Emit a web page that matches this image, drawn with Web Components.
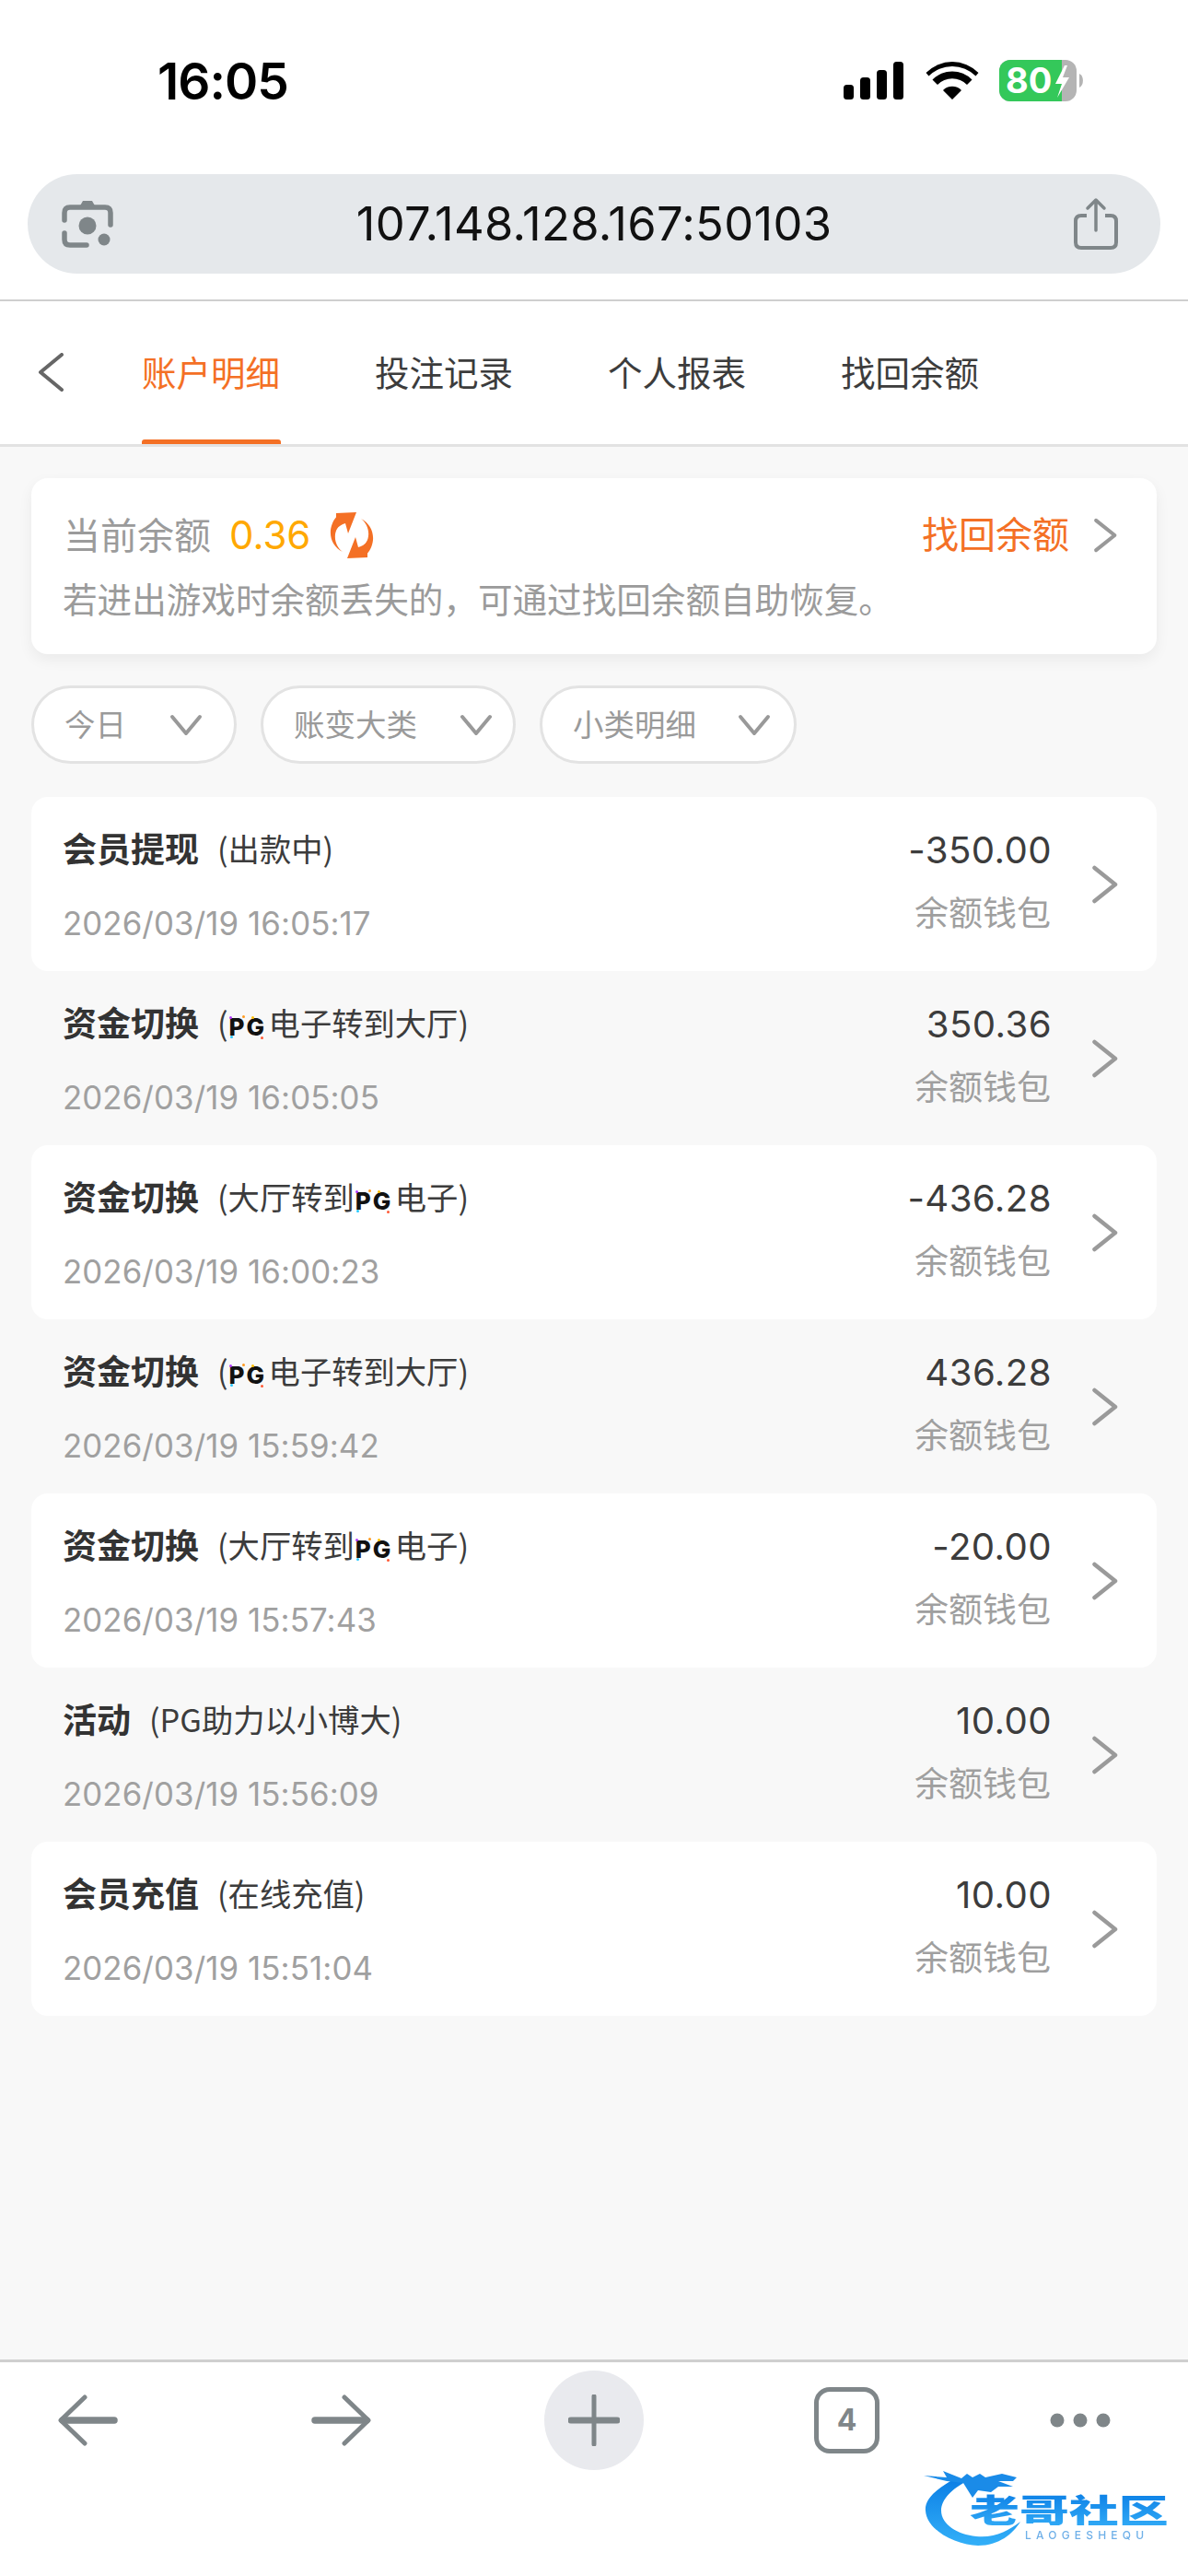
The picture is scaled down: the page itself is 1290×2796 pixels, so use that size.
<!DOCTYPE html>
<html lang="zh"><head><meta charset="utf-8">
<style>
html,body{margin:0;padding:0;background:#f8f8f8}
body{width:1290px;height:2796px;font-family:Inter,"Noto Sans CJK SC",sans-serif;overflow:hidden}
app-shell{height:2796px}
</style></head><body>
<app-shell>
<status-bar></status-bar>
<address-bar></address-bar>
<tab-nav></tab-nav>
<main-area>
<balance-card></balance-card>
<filter-row>
<filter-pill w="223" r="34">今日</filter-pill>
<filter-pill w="277" r="22">账变大类</filter-pill>
<filter-pill w="279" r="25">小类明细</filter-pill>
</filter-row>
<txn-list>
<txn-row white title="会员提现" amount="-350.00" date="2026/03/19 16:05:17"><span>(出款中)</span></txn-row>
<txn-row title="资金切换" amount="350.36" date="2026/03/19 16:05:05"><span>(<pg-mark></pg-mark>电子转到大厅)</span></txn-row>
<txn-row white title="资金切换" amount="-436.28" date="2026/03/19 16:00:23"><span>(大厅转到<pg-mark></pg-mark>电子)</span></txn-row>
<txn-row title="资金切换" amount="436.28" date="2026/03/19 15:59:42"><span>(<pg-mark></pg-mark>电子转到大厅)</span></txn-row>
<txn-row white title="资金切换" amount="-20.00" date="2026/03/19 15:57:43"><span>(大厅转到<pg-mark></pg-mark>电子)</span></txn-row>
<txn-row title="活动" amount="10.00" date="2026/03/19 15:56:09"><span>(PG助力以小博大)</span></txn-row>
<txn-row white title="会员充值" amount="10.00" date="2026/03/19 15:51:04"><span>(在线充值)</span></txn-row>
</txn-list>
</main-area>
<bottom-toolbar></bottom-toolbar>
</app-shell>
<script>
function def(name,html){
  customElements.define(name,class extends HTMLElement{
    connectedCallback(){
      if(this.shadowRoot)return;
      const r=this.attachShadow({mode:'open'});
      r.innerHTML=typeof html==='function'?html(this):html;
    }
  });
}
const chevR=(c='#999',w=30,h=42,sw=4.5)=>`<svg width="${w}" height="${h}" viewBox="0 0 30 42" fill="none"><path d="M3.5 3 L26 21 L3.5 39" stroke="${c}" stroke-width="${sw}" stroke-linecap="round" stroke-linejoin="round"/></svg>`;

def('app-shell',`<style>:host{display:flex;flex-direction:column;background:#f8f8f8}</style><slot></slot>`);

def('status-bar',`<style>
:host{display:flex;align-items:center;justify-content:space-between;height:176px;box-sizing:border-box;padding:0 111px 0 171px;background:#fff;color:#000}
.t{font:600 55px/1 Inter,sans-serif;letter-spacing:-1px}
.r{display:flex;align-items:center}
</style>
<div class="t">16:05</div>
<div class="r">
<svg width="66" height="42" viewBox="0 0 66 42"><g fill="#000"><rect x="0" y="25" width="11" height="16" rx="3.5"/><rect x="18" y="17" width="11" height="24" rx="3.5"/><rect x="36" y="9" width="11" height="32" rx="3.5"/><rect x="54" y="0" width="11" height="41" rx="3.5"/></g></svg>
<svg style="margin-left:23px" width="58" height="42" viewBox="0 0 58 42"><path d="M29 41 L19 31 A14 14 0 0 1 39 31 Z M13 25 L7.500 19.500 A30 30 0 0 1 50.500 19.500 L45 25 A22.500 22.500 0 0 0 13 25 Z M3.500 15.500 L0.500 12 A40 40 0 0 1 57.500 12 L54.500 15.500 A36 36 0 0 0 3.500 15.500 Z" fill="#000"/></svg>
<svg style="margin-left:22px" width="94" height="46" viewBox="0 0 94 46">
<rect x="0" y="0" width="84" height="45" rx="12" fill="#b4b4b4"/>
<path d="M12 0H68V45H12A12 12 0 0 1 0 33V12A12 12 0 0 1 12 0Z" fill="#34c85a"/>
<path d="M87 15 a6 8 0 0 1 0 15Z" fill="#b4b4b4"/>
<text x="7" y="36" font-family="Inter" font-weight="700" font-size="38" fill="#fff">80</text>
<path d="M71 6 L61 26 H68 L63 41 L76 19 H69 L74 6Z" fill="#fff"/>
</svg>
</div>`);

def('address-bar',`<style>
:host{display:block;height:151px;box-sizing:border-box;padding:13px 30px 0;background:#fff;border-bottom:2px solid #cfcfcf}
.b{height:108px;border-radius:54px;background:#e5e8eb;display:flex;align-items:center;justify-content:space-between;padding:0 45px 0 37px;position:relative}
.u{position:absolute;left:0;right:0;text-align:center;font:400 50.700px/106px Inter,sans-serif;color:#111;letter-spacing:.3px}
svg{position:relative}
</style>
<div class="b">
<svg width="56" height="56" viewBox="0 0 56 56" fill="none"><path d="M19 10 L23 3 H33 L37 10Z" fill="#7f8689"/><path d="M3 24 V16 Q3 10 9 10 H47 Q53 10 53 16 V29" stroke="#7f8689" stroke-width="5.500" stroke-linecap="round"/><path d="M3 38 V45 Q3 51 9 51 H27" stroke="#7f8689" stroke-width="5.500" stroke-linecap="round"/><circle cx="28" cy="30" r="9.500" fill="#7f8689"/><circle cx="46" cy="45" r="6.500" fill="#7f8689"/></svg>
<div class="u">107.148.128.167:50103</div>
<svg width="50" height="58" viewBox="0 0 50 58" fill="none"><path d="M15 20 H9 Q3 20 3 26 V49 Q3 55 9 55 H41 Q47 55 47 49 V26 Q47 20 41 20 H35" stroke="#7f8689" stroke-width="4"/><path d="M25 36 V4 M16 12 L25 3 L34 12" stroke="#7f8689" stroke-width="3.500" stroke-linecap="round" stroke-linejoin="round"/></svg>
</div>`);

def('tab-nav',`<style>
:host{display:block;background:#fff;height:158px;box-sizing:border-box;border-bottom:3px solid #e2e2e2}
nav{display:flex;height:155px;align-items:stretch;padding-left:41px}
svg{align-self:center;margin-right:83px;position:relative;top:-1px}
a{font:400 37.500px/151px "Noto Sans CJK SC",sans-serif;color:#3c3c3c;margin-right:103px;position:relative;white-space:nowrap}
a.on{color:#f47025}
a.on::after{content:"";position:absolute;left:0;right:-1px;bottom:0;height:5px;background:#f47025;border-radius:3px 3px 0 0}
</style>
<nav>
<svg width="30" height="42" viewBox="0 0 30 42" fill="none"><path d="M26 2 L3 21 L26 40" stroke="#666" stroke-width="4" stroke-linecap="round" stroke-linejoin="round"/></svg>
<a class="on">账户明细</a><a>投注记录</a><a>个人报表</a><a>找回余额</a>
</nav>`);

def('main-area',`<style>:host{display:block;flex:1;padding:34px 34px 0;background:#f8f8f8}</style><slot></slot>`);

def('balance-card',`<style>
:host{display:block;height:191px;box-sizing:border-box;background:#fff;border-radius:18px;box-shadow:0 6px 16px rgba(0,0,0,.06);padding:34px 42px 0 35px;font-family:"Noto Sans CJK SC",sans-serif}
.a{display:flex;align-items:center;height:56px}
.l{font-size:40px;line-height:52px;color:#9b9b9b;height:56px}
.n{font:400 42px/56px Inter,sans-serif;color:#ffa800;margin-left:20px}
svg.rf{margin-left:19px}
.sp{flex:1}
.g{font-size:40px;line-height:50px;height:56px;color:#f47025;margin-right:26px}
.h{font-size:37.600px;line-height:52px;color:#9b9b9b;margin-top:14px;margin-left:-1px;white-space:nowrap}
</style>
<div class="a"><span class="l">当前余额</span><span class="n">0.36</span>
<svg class="rf" width="52" height="52" viewBox="0 0 52 52"><g fill="#f47025"><path d="M10 5 L11 17 C5 26 8 38 16 44 C2 37 -2 19 10 5Z"/><path d="M9 2 L31 1 L22 24 L19 13 C15 14 12 16 9 20Z"/><path d="M42 47 L41 35 C47 26 44 14 36 8 C50 15 54 33 42 47Z"/><path d="M43 50 L21 51 L30 28 L33 39 C37 38 40 36 43 32Z"/></g></svg>
<span class="sp"></span><span class="g">找回余额</span>${chevR('#999',27,42,4.500)}</div>
<div class="h">若进出游戏时余额丢失的&#xFF0C;可通过找回余额自助恢复。</div>`);

def('filter-row',`<style>:host{display:flex;gap:26px;margin:34px 0 36px 0}</style><slot></slot>`);

def('filter-pill',h=>`<style>
:host{display:flex;box-sizing:border-box;width:${h.getAttribute('w')}px;height:85px;align-items:center;justify-content:space-between;background:#fff;border:3px solid #e3e3e3;border-radius:42.500px;padding:0 ${h.getAttribute('r')}px 3px 33px;font:400 33.500px/1 "Noto Sans CJK SC",sans-serif;color:#9a9a9a}
svg{margin-top:3px}
</style><slot></slot><svg width="36" height="24" viewBox="0 0 36 24" fill="none"><path d="M3 3 L18 21 L33 3" stroke="#999" stroke-width="4" stroke-linecap="round" stroke-linejoin="round"/></svg>`);

def('txn-list',`<style>:host{display:flex;flex-direction:column}</style><slot></slot>`);

def('txn-row',h=>`<style>
:host{display:flex;height:189px;box-sizing:border-box;border-radius:18px;padding:35px 41px 0 34px;${h.hasAttribute('white')?'background:#fff;':''}position:relative}
.l{flex:1;min-width:0}
.t{display:flex;align-items:center;height:40px;white-space:nowrap;font-family:"Noto Sans CJK SC",sans-serif;color:#3c3c3c}
b{font-weight:700;font-size:37px;color:#333;margin-right:20px}
.s{font-size:34.300px}
.d{font:400 34.800px/44px Inter,sans-serif;color:#a0a0a0;margin-top:40px;letter-spacing:.1px}
.r{text-align:right;padding-top:1px}
.m{font:400 40.200px/44px Inter,sans-serif;color:#3c3c3c;letter-spacing:.4px}
.w{font:400 37px/44px "Noto Sans CJK SC",sans-serif;color:#9f9f9f;margin:22px 1px 0 0}
svg{margin:39px 0 0 43px;flex:none}
</style>
<div class="l"><div class="t"><b>${h.getAttribute('title')}</b><span class="s"><slot></slot></span></div><div class="d">${h.getAttribute('date')}</div></div>
<div class="r"><div class="m">${h.getAttribute('amount')}</div><div class="w">余额钱包</div></div>
${chevR('#9a9a9a',30,42,4.500)}`);

def('pg-mark',`<style>
:host{display:inline-block;position:relative;vertical-align:0;margin:0 1px 0 1px;font:800 26px/1 Inter,sans-serif;color:#111;letter-spacing:2px;width:42px;white-space:nowrap}
i{position:absolute;width:3px;height:3px;border-radius:50%}
</style>PG<i style="left:0;top:1px;background:#b23cff"></i><i style="left:14px;top:0;background:#ff9a1f"></i><i style="left:24px;top:1px;background:#ffbf00"></i><i style="left:1px;top:22px;background:#28c7ff"></i><i style="left:34px;top:23px;background:#ff5a36"></i>`);

def('bottom-toolbar',`<style>
:host{display:block;position:relative;height:235px;box-sizing:border-box;background:#fff;border-top:3px solid #cfcfcf}
.i{display:flex;align-items:center;height:108px;margin-top:9px;padding-left:62px}
.p{width:108px;height:108px;border-radius:50%;background:#e9eaee;display:flex;align-items:center;justify-content:center}
.tab{width:71px;height:72px;box-sizing:border-box;border:5px solid #7f8689;border-radius:17px;display:flex;align-items:center;justify-content:center;font:700 32px/1 Inter,sans-serif;color:#7f8689}
.wm{position:absolute;left:1000px;top:111px;width:280px;height:90px;filter:blur(.6px)}
.wm svg{position:absolute;left:0;top:0}
.wm .zh{position:absolute;left:53px;top:30px;font:900 35px/36px "Noto Sans CJK SC",sans-serif;white-space:nowrap;transform:scaleX(1.54);transform-origin:left top;color:transparent;background:linear-gradient(#0d80e6,#2fa8f5);-webkit-background-clip:text;background-clip:text}
.wm .en{position:absolute;left:113px;top:71px;font:500 12px/12px Inter,sans-serif;letter-spacing:5.200px;color:#6fb0e8;white-space:nowrap}
</style>
<div class="i">
<svg width="66" height="56" viewBox="0 0 66 56" fill="none"><path d="M62 28 H6" stroke="#7f8689" stroke-width="7.500" stroke-linecap="round"/><path d="M30 3 L4 28 L30 53" stroke="#7f8689" stroke-width="5" stroke-linecap="round" stroke-linejoin="round"/></svg>
<svg width="66" height="56" viewBox="0 0 66 56" fill="none" style="margin-left:210px"><path d="M4 28 H60" stroke="#7f8689" stroke-width="7.500" stroke-linecap="round"/><path d="M36 3 L62 28 L36 53" stroke="#7f8689" stroke-width="5" stroke-linecap="round" stroke-linejoin="round"/></svg>
<div class="p" style="margin-left:187px"><svg width="56" height="56" viewBox="0 0 56 56" fill="none"><path d="M28 2 V54" stroke="#7f8689" stroke-width="5" stroke-linecap="round"/><path d="M3 28 H53" stroke="#7f8689" stroke-width="7" stroke-linecap="round"/></svg></div>
<div class="tab" style="margin-left:185px">4</div>
<svg width="66" height="16" viewBox="0 0 66 16" fill="#7f8689" style="margin-left:185px"><circle cx="8" cy="8" r="7.500"/><circle cx="33" cy="8" r="7.500"/><circle cx="58" cy="8" r="7.500"/></svg>
</div>
<div class="wm">
<svg width="280" height="90" viewBox="0 0 280 90" fill="none"><defs><linearGradient id="g" x1="0" y1="0" x2="0" y2="1"><stop offset="0" stop-color="#0d80e6"/><stop offset="1" stop-color="#33b0f8"/></linearGradient></defs><path d="M32 18 C12 30 4 40 5 50 C6 72 40 88 62 88 C85 88 100 75 108 62 C95 72 80 80 60 78 C40 76 22 65 22 50 C22 38 34 26 50 18Z" fill="url(#g)"/><path d="M3 12 L28 14 L24 7 L44 15 L50 10 L56 14 L64 10 L70 14 L88 10 L104 14 L100 18 L84 18 L100 24 L84 24 L76 30 L62 28 L56 36 L46 20 L28 18Z" fill="#1a8be8"/></svg>
<div class="zh">老哥社区</div><div class="en">LAOGESHEQU</div>
</div>`);
</script>
</body></html>
